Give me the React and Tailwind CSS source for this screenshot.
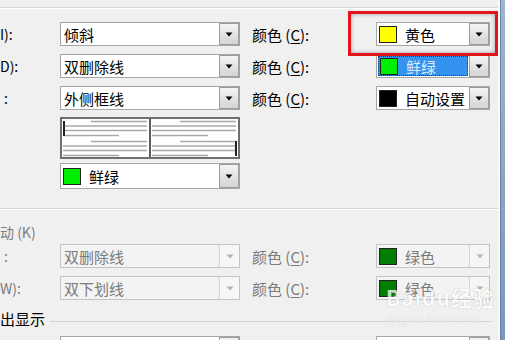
const GRAY_TEXT = 'text-[#7b7b7b]';

function Arrow({ disabled }) {
  return (
    <svg width="8" height="5" viewBox="0 0 8 5">
      <path d="M0.5 0.5h7L4 4.5z" fill={disabled ? '#b4b4b4' : '#000'} />
    </svg>
  );
}

function DropBtn({ disabled }) {
  return (
    <div
      className={
        disabled
          ? 'flex w-[20px] items-center justify-center border-l border-[#d6d6d6] bg-[#f6f6f6]'
          : 'flex w-[20px] items-center justify-center border border-[#9c9c9c] bg-gradient-to-b from-[#f4f4f4] to-[#d4d4d4]'
      }
    >
      <Arrow disabled={disabled} />
    </div>
  );
}

function Swatch({ color }) {
  return <span className={`h-[17px] w-[18px] shrink-0 border border-[#222] ${color}`} />;
}

function Combo({ width, text, swatch, disabled, selected, tall }) {
  const box = disabled ? 'border-[#c3c3c3] bg-[#f3f3f3]' : 'border-[#a6a6a6] bg-white';
  return (
    <div className={`flex shrink-0 border ${tall ? 'h-[26px]' : 'h-6'} ${width} ${box}`}>
      {selected ? (
        <div className="m-px flex flex-1 items-center gap-[8px] border border-dotted border-[#1c3a66] bg-[#3592ee] pl-px">
          <Swatch color={swatch} />
          <span className="leading-none text-[#d9ecff]">{text}</span>
        </div>
      ) : (
        <div className={`flex flex-1 items-center ${swatch ? 'gap-[8px] pl-[2px]' : 'pl-[3px]'}`}>
          {swatch && <Swatch color={swatch} />}
          {text && <span className={`leading-none ${disabled ? GRAY_TEXT : 'text-black'}`}>{text}</span>}
        </div>
      )}
      <DropBtn disabled={disabled} />
    </div>
  );
}

function Label({ children, disabled, className = '' }) {
  return (
    <div className={`shrink-0 text-[14px] leading-none ${disabled ? GRAY_TEXT : 'text-black'} ${className}`}>
      {children}
    </div>
  );
}

function Row({ left, leftText, color, colorSwatch, disabled, selected, className = '' }) {
  return (
    <div className={`flex h-6 items-center ${className}`}>
      <Label disabled={disabled} className="w-[60px]">
        {left}
      </Label>
      <Combo width="w-[180px]" text={leftText} disabled={disabled} />
      <Label disabled={disabled} className="ml-3 w-[124px] text-[15px]">
        颜色 (<span className="underline underline-offset-2">C</span>):
      </Label>
      <Combo width="w-[114px]" text={color} swatch={colorSwatch} disabled={disabled} selected={selected} />
    </div>
  );
}

function PreviewHalf({ barX, barY, start }) {
  const ys = [1.5, 6, 10.5, 15.5, 21.5, 26, 30.5, 35.5];
  return (
    <svg width="87" height="38" viewBox="0 0 87 38" className="block">
      {ys.map((y, i) => {
        const k = i % 4;
        const x1 = k === 0 ? start + 28 : start;
        const x2 = k === 3 ? start + 56 : 85;
        return <line key={i} x1={x1} y1={y} x2={x2} y2={y} stroke="#a9a9a9" strokeWidth="1.6" />;
      })}
      <rect x={barX} y={barY} width="2" height="15" fill="#222" />
    </svg>
  );
}

export default function App() {
  return (
    <div className="relative h-[340px] w-[505px] overflow-hidden bg-[#f0f0f0] font-['Noto_Sans_CJK_SC','Noto_Sans',sans-serif] text-[15px] text-black">
      <div className="flex h-full">
        <div className="w-[498px]">
          <div className="h-[7px]" />
          <div className="h-[2px] border-t border-b border-t-[#d8d8d8] border-b-white" />

          <Row className="mt-[13px]" left={<>I):</>} leftText="倾斜" color="黄色" colorSwatch="bg-[#ffff00]" />
          <Row className="mt-2" left={<>D):</>} leftText="双删除线" color="鲜绿" colorSwatch="bg-[#00ee00]" selected />
          <Row className="mt-2" left={<span className="pl-[4px]">:</span>} leftText="外侧框线" color="自动设置" colorSwatch="bg-black" />

          <div className="ml-[60px] mt-[7px] flex h-[42px] w-[180px] border-2 border-[#6f6f6f] bg-white">
            <div className="pt-px">
              <PreviewHalf barX={1} barY={1} start={1} />
            </div>
            <div className="w-[2px] bg-[#5c5c5c]" />
            <div className="pt-px">
              <PreviewHalf barX={84} barY={21} start={1} />
            </div>
          </div>

          <div className="ml-[60px] mt-[4px]">
            <Combo width="w-[180px]" text="鲜绿" swatch="bg-[#00ee00]" tall />
          </div>

          <div className="mt-[19px] h-[2px] border-t border-b border-t-[#d6d6d6] border-b-white" />

          <div className={`mt-[14px] h-4 text-[14px] leading-4 ${GRAY_TEXT}`}>动 (K)</div>

          <Row className="mt-1" disabled left={<span className="pl-[4px]">:</span>} leftText="双删除线" color="绿色" colorSwatch="bg-[#047d04]" />
          <Row className="mt-2" disabled left={<>W):</>} leftText="双下划线" color="绿色" colorSwatch="bg-[#047d04]" />

          <div className="mt-[10px] flex h-[17px] items-start pr-[6px]">
            <span className="text-[15px] leading-[17px]">出显示</span>
            <div className="ml-[5px] mt-[11px] h-px flex-1 bg-[#d4d4d4]" />
          </div>

          <div className="mt-[9px] flex">
            <div className="ml-[60px]">
              <Combo width="w-[180px]" text="" swatch="bg-black" />
            </div>
            <div className="ml-[136px]">
              <Combo width="w-[114px]" text="" swatch="bg-black" />
            </div>
          </div>
        </div>
        <div className="w-[2px] bg-[#fafafa]" />
        <div className="w-[5px] border-l border-[#6c84a6] bg-gradient-to-b from-[#9fb4cf] to-[#7d96b8]" />
      </div>

      {/* red highlight frame */}
      <div className="absolute left-[348px] top-[11px] h-[45px] w-[150px] border-[3px] border-[#e3151a] shadow-[inset_0_0_4px_rgba(0,0,0,0.35)]" />

      {/* watermark */}
      <div className="pointer-events-none absolute left-[386px] top-[287px] text-white opacity-75">
        <div className="text-[21px] font-bold leading-none tracking-[1px] [text-shadow:0_0_1px_#8f8f8f]">Baidu经验</div>
        <div className="mt-[6px] text-[10px] leading-none tracking-[0.5px] [text-shadow:0_0_1px_#aaa]">jingyan.baidu.com</div>
      </div>
    </div>
  );
}
